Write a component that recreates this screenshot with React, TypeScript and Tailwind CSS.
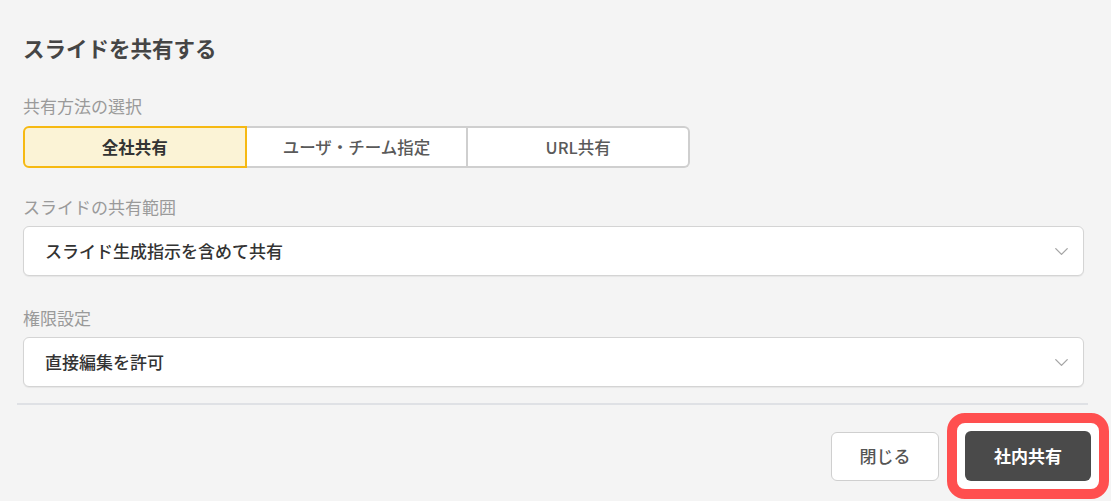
import { ChevronDown } from "lucide-react";

const font = { fontFamily: '"Noto Sans CJK JP", "Noto Sans", sans-serif' };

const methods = ["全社共有", "ユーザ・チーム指定", "URL共有"];

function SelectBox({ value }: { value: string }) {
  return (
    <div className="flex h-[50px] items-center justify-between rounded-md border border-[#d4d4d4] bg-white pl-[21px] pr-[10px] shadow-[0_1px_1px_rgba(0,0,0,0.06)]">
      <span className="text-[17px] font-medium text-[#333]">{value}</span>
      <ChevronDown size={23} strokeWidth={1.4} className="text-[#a5a5a5]" />
    </div>
  );
}

export default function App() {
  const selected = 0;

  return (
    <div className="h-[501px] w-full bg-[#f4f4f4] pt-[34px]" style={font}>
      <div className="pl-[23px] pr-[27px]">
        <h2 className="text-[21.5px] font-bold leading-[28px] text-[#454545]">スライドを共有する</h2>

        <p className="mt-[33px] mb-[9px] text-[17px] leading-[22px] text-[#9a9a9a]">共有方法の選択</p>
        <div className="flex w-[667px]">
          {methods.map((m, i) => (
            <button
              key={m}
              className={
                i === selected
                  ? "h-[42px] flex-1 rounded-l-md border-2 border-[#f6b912] bg-[#fbf3d6] text-[16.5px] font-bold text-[#333]"
                  : i === methods.length - 1
                    ? "h-[42px] flex-1 rounded-r-md border-2 border-l-0 border-[#cfcfcf] bg-white text-[16.5px] font-medium text-[#5a5a5a]"
                    : "h-[42px] flex-1 border-2 border-l-0 border-[#cfcfcf] bg-white text-[16.5px] font-medium text-[#5a5a5a]"
              }
            >
              {m}
            </button>
          ))}
        </div>

        <p className="mt-[28px] mb-[8px] text-[17px] leading-[22px] text-[#9a9a9a]">スライドの共有範囲</p>
        <SelectBox value="スライド生成指示を含めて共有" />

        <p className="mt-[31px] mb-[8px] text-[17px] leading-[22px] text-[#9a9a9a]">権限設定</p>
        <SelectBox value="直接編集を許可" />
      </div>

      <div className="ml-[17px] mr-[23px] mt-[16px] h-[2px] bg-[#dfe1e5]" />

      <div className="mr-[2px] mt-[8px] flex items-center justify-end gap-[8px]">
        <button className="h-[49px] w-[108px] rounded-md border border-[#cfcfcf] bg-white text-[17px] font-medium text-[#555]">
          閉じる
        </button>
        <div className="rounded-[18px] border-[10px] border-[#ff4f4f] bg-white p-[8px]">
          <button className="block h-[50px] w-[126px] rounded-md bg-[#4a4a4a] text-[17px] font-bold text-white">
            社内共有
          </button>
        </div>
      </div>
    </div>
  );
}
